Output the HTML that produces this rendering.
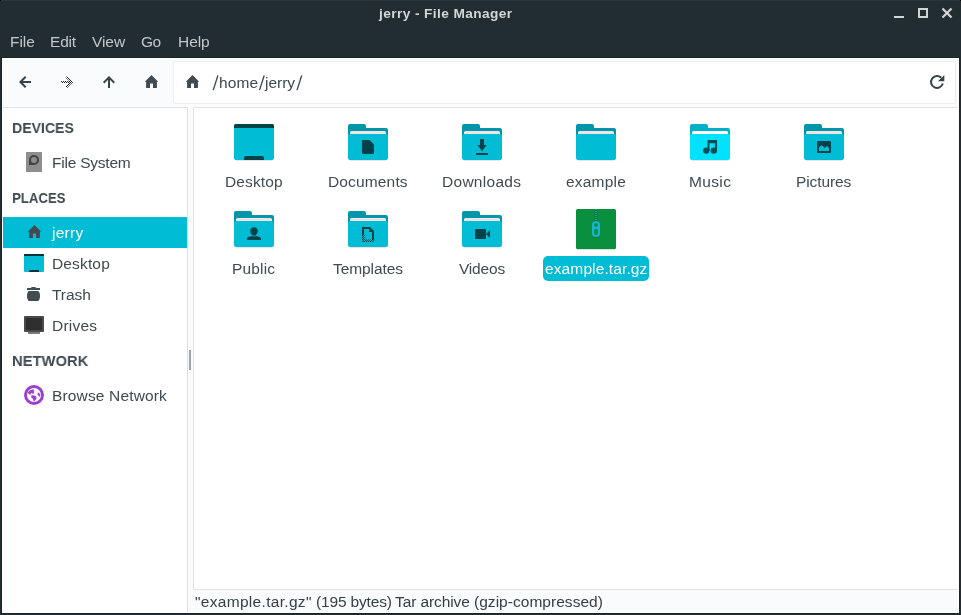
<!DOCTYPE html>
<html>
<head>
<meta charset="utf-8">
<title>jerry - File Manager</title>
<style>
*{margin:0;padding:0;box-sizing:border-box;}
html,body{width:961px;height:615px;overflow:hidden;background:#222d32;}
body{position:relative;font-family:"Liberation Sans",sans-serif;font-size:14.67px;color:#414c52;}
.abs{position:absolute;}
.t{position:absolute;white-space:nowrap;line-height:20px;height:20px;will-change:transform;}
.b{font-weight:bold;}
.ttl{color:#d4d6d7;}
.menu{color:#c3c7c9;}
#frame{left:1px;top:57px;width:959px;height:557px;border:1px solid #1a242a;}
#toolbar{left:2px;top:58px;width:957px;height:555px;background:#fafbfc;border:1px solid #fff;}
#entry{left:173px;top:61px;width:783px;height:43px;background:#fff;border:1px solid #eceeef;border-radius:3px;}
#side{left:3px;top:107px;width:185px;height:505px;background:#fff;border-top:1px solid #e0e2e4;border-right:1px solid #e0e2e4;}
#sel{left:3px;top:217px;width:184px;height:31px;background:#00bcd4;}
#main{left:193px;top:107px;width:765px;height:483px;background:#fff;border:1px solid #e0e2e4;border-right:none;}
#handle{left:189px;top:350px;width:2px;height:20px;background:#9ea4a7;}
#lblsel{left:543px;top:256px;width:106px;height:25px;background:#00bcd4;border-radius:5px;}
.lbl{color:#404b53;}
.sd{color:#3e4950;}
.pth{color:#3e4950;}
.st{color:#353f44;}
svg{position:absolute;overflow:visible;}
</style>
</head>
<body>
<!-- title bar -->
<div class="abs" style="left:0;top:0;width:961px;height:1px;background:#2b363b;"></div>
<div class="abs" style="left:0;top:0;width:1px;height:1px;background:#000;"></div>
<div class="abs" style="left:960px;top:0;width:1px;height:1px;background:#000;"></div>
<!-- window buttons -->
<div class="abs" style="left:894px;top:16px;width:10px;height:2px;background:#d4d6d7;"></div>
<div class="abs" style="left:918px;top:8px;width:10px;height:10px;border:2px solid #d0d3d4;"></div>
<svg style="left:942px;top:8px;" width="10" height="10" viewBox="0 0 10 10"><path d="M0.5 0.5L9.5 9.5M9.5 0.5L0.5 9.5" stroke="#d4d6d7" stroke-width="2.2" fill="none"/></svg>

<!-- menu bar -->

<!-- toolbar + content bg -->
<div class="abs" id="frame"></div>
<div class="abs" id="toolbar"></div>
<div class="abs" id="entry"></div>

<!-- sidebar -->
<div class="abs" id="side"></div>
<div class="abs" id="sel"></div>
<div class="abs" id="handle"></div>

<!-- main -->
<div class="abs" id="main"></div>
<div class="abs" id="lblsel"></div>

<div class="t ttl b" style="left:378.85px;top:3.75px;font-size:13.7px;letter-spacing:0.4px;">jerry - File Manager</div>
<div class="t menu" style="left:10.15px;top:32.33px;font-size:15.5px;letter-spacing:-0.033px;">File</div>
<div class="t menu" style="left:50.05px;top:32.33px;font-size:15.5px;letter-spacing:-0.183px;">Edit</div>
<div class="t menu" style="left:91.75px;top:32.33px;font-size:15.5px;letter-spacing:-0.067px;">View</div>
<div class="t menu" style="left:140.75px;top:32.33px;font-size:15.5px;letter-spacing:-0.45px;">Go</div>
<div class="t menu" style="left:177.75px;top:32.33px;font-size:15.5px;letter-spacing:-0.067px;">Help</div>
<div class="t pth" style="left:219.0px;top:73.13px;font-size:15.5px;letter-spacing:0.133px;">home</div>
<div class="t pth" style="left:265.0px;top:73.13px;font-size:15.5px;letter-spacing:-0.025px;">jerry</div>
<div class="t sd b" style="left:11.85px;top:118.03px;font-size:15.5px;transform:scaleX(0.9075);transform-origin:1.0px 0;">DEVICES</div>
<div class="t sd" style="left:51.85px;top:153.03px;font-size:15.5px;letter-spacing:-0.225px;">File System</div>
<div class="t sd b" style="left:11.85px;top:188.03px;font-size:15.5px;transform:scaleX(0.8482);transform-origin:1.0px 0;">PLACES</div>
<div class="t sd" style="left:52.3px;top:223.03px;font-size:15.5px;letter-spacing:0.275px;color:#fff;">jerry</div>
<div class="t sd" style="left:51.55px;top:254.03px;font-size:15.5px;letter-spacing:0.15px;">Desktop</div>
<div class="t sd" style="left:52.15px;top:285.03px;font-size:15.5px;letter-spacing:-0.037px;">Trash</div>
<div class="t sd" style="left:51.55px;top:316.03px;font-size:15.5px;letter-spacing:0.22px;">Drives</div>
<div class="t sd b" style="left:11.9px;top:351.13px;font-size:15.5px;transform:scaleX(0.9511);transform-origin:1.0px 0;">NETWORK</div>
<div class="t sd" style="left:51.75px;top:386.13px;font-size:15.5px;letter-spacing:0.154px;">Browse Network</div>
<div class="t lbl" style="left:224.55px;top:172.03px;font-size:15.5px;letter-spacing:0.133px;">Desktop</div>
<div class="t lbl" style="left:327.55px;top:172.03px;font-size:15.5px;letter-spacing:0.15px;">Documents</div>
<div class="t lbl" style="left:442.45px;top:172.03px;font-size:15.5px;letter-spacing:0.281px;">Downloads</div>
<div class="t lbl" style="left:565.85px;top:172.03px;font-size:15.5px;letter-spacing:0.2px;">example</div>
<div class="t lbl" style="left:688.55px;top:172.03px;font-size:15.5px;letter-spacing:0.363px;">Music</div>
<div class="t lbl" style="left:795.75px;top:172.03px;font-size:15.5px;letter-spacing:-0.093px;">Pictures</div>
<div class="t lbl" style="left:232.45px;top:259.03px;font-size:15.5px;letter-spacing:0.16px;">Public</div>
<div class="t lbl" style="left:333.35px;top:259.03px;font-size:15.5px;letter-spacing:-0.081px;">Templates</div>
<div class="t lbl" style="left:458.95px;top:259.03px;font-size:15.5px;letter-spacing:-0.19px;">Videos</div>
<div class="t lbl" style="left:544.95px;top:259.03px;font-size:15.5px;letter-spacing:0.119px;color:#fff;">example.tar.gz</div>
<div class="t st" style="left:194.75px;top:591.93px;font-size:15.5px;letter-spacing:0.307px;">&quot;example.tar.gz&quot;</div>
<div class="t st" style="left:315.7px;top:591.93px;font-size:15.5px;letter-spacing:-0.16px;">(195 bytes)</div>
<div class="t st" style="left:395.05px;top:591.93px;font-size:15.5px;letter-spacing:-0.105px;">Tar archive</div>
<div class="t st" style="left:474.0px;top:591.93px;font-size:15.5px;letter-spacing:0.034px;">(gzip-compressed)</div>
<svg width="0" height="0" style="left:0;top:0;">
<defs>
  <g id="fold">
    <path d="M4 13.5V8q0-2 2-2h14q2 0 2 2v2h20q2 0 2 2v6H4z" fill="#0096aa"/>
    <path d="M6 14.5q0-1.5 1.5-1.5h33q1.5 0 1.5 1.5V20H6z" fill="#ede5e5"/>
    <path d="M4 17.5q0-1.5 1.5-1.5h37q1.5 0 1.5 1.5V40q0 2-2 2H6q-2 0-2-2z" fill="#00bcd4"/>
    <path d="M6 42.5h36" stroke="#c9a9a9" stroke-opacity=".35" stroke-width="1"/>
  </g>
  <g id="foldhi">
    <path d="M4 13.5V8q0-2 2-2h14q2 0 2 2v2h20q2 0 2 2v6H4z" fill="#00b0c8"/>
    <path d="M6 14.5q0-1.5 1.5-1.5h33q1.5 0 1.5 1.5V20H6z" fill="#ffffff"/>
    <path d="M4 17.5q0-1.5 1.5-1.5h37q1.5 0 1.5 1.5V40q0 2-2 2H6q-2 0-2-2z" fill="#00e1fb"/>
    <path d="M6 42.5h36" stroke="#c9a9a9" stroke-opacity=".35" stroke-width="1"/>
  </g>
  <g id="desk48">
    <rect x="4" y="6" width="40" height="36" rx="2" fill="#00bcd4"/>
    <path d="M4 10V8q0-2 2-2h36q2 0 2 2v2z" fill="#00424a"/>
    <path d="M14 42v-2q0-2 2-2h16q2 0 2 2v2z" fill="#00424a"/>
    <path d="M6 42.5h36" stroke="#c9a9a9" stroke-opacity=".35" stroke-width="1"/>
  </g>
  <pattern id="stip" width="2" height="2" patternUnits="userSpaceOnUse">
    <rect x="0" y="0" width="1" height="1" fill="#fff"/><rect x="1" y="1" width="1" height="1" fill="#fff"/>
  </pattern>
</defs>
</svg>

<!-- toolbar icons -->
<svg style="left:0;top:0;" width="961" height="120" viewBox="0 0 961 120">
  <g fill="none" stroke="#37434a" stroke-width="2">
    <path d="M25.710 76.700L20.410 82l5.300 5.300M20.500 82H31"/>
    <path d="M103.700 82.710L109 77.410l5.300 5.300M109 77.500V88"/>
  </g>
  <path d="M941.240 77.760A6 6 0 1 0 942.800 83.600" fill="none" stroke="#37434a" stroke-width="2"/>
  <path d="M944.300 75v6.300H938z" fill="#37434a"/>
  <path d="M217.900 75.500L213.200 90.100M264.200 75.500L259.500 90.100M301.700 75.500L297 90.100" fill="none" stroke="#3e4950" stroke-width="1.350"/>
  <mask id="mk" maskUnits="userSpaceOnUse" x="55" y="70" width="30" height="30"><rect x="55" y="70" width="30" height="30" fill="url(#stip)"/></mask>
  <g mask="url(#mk)" fill="none" stroke="#1a2328">
    <path stroke-width="2.300" d="M66.290 76.700L71.590 82l-5.300 5.300"/><path stroke-width="2" d="M71.500 82H61"/>
  </g>
</svg>
<!-- home toolbar -->
<svg style="left:145px;top:75px;" width="13" height="13" viewBox="0 0 13 13"><path fill="#3f4a51" d="M6.5 0L13.2 6.7H11.9V13H8V8.6H5V13H1.1V6.7H-0.2z"/></svg>
<!-- home in entry -->
<svg style="left:186px;top:75px;" width="13" height="13" viewBox="0 0 13 13"><path fill="#3f4a51" d="M6.5 0L13.2 6.7H11.9V13H8V8.6H5V13H1.1V6.7H-0.2z"/></svg>

<!-- sidebar icons -->
<!-- hdd -->
<svg style="left:26px;top:152px;" width="16" height="20" viewBox="0 0 16 20">
  <rect width="16" height="20" rx=".6" fill="#8e8e8e"/>
  <path d="M3 13V8a5 5 0 1 1 5 5z" fill="#444"/>
  <circle cx="8" cy="8" r="3" fill="#8e8e8e"/>
</svg>
<!-- home sidebar -->
<svg style="left:28px;top:225px;" width="13" height="13" viewBox="0 0 13 13"><path fill="#414c52" d="M6.5 0L13.2 6.7H11.9V13H8V8.6H5V13H1.1V6.7H-0.2z"/></svg>
<!-- desktop small -->
<svg style="left:24px;top:254px;" width="20" height="18" viewBox="0 0 20 18">
  <rect width="20" height="18" rx="1" fill="#00bcd4"/>
  <path d="M0 2V1q0-1 1-1h18q1 0 1 1v1z" fill="#00323a"/>
  <path d="M5 18v-1q0-1 1-1h8q1 0 1 1v1z" fill="#00323a"/>
</svg>
<!-- trash -->
<svg style="left:27px;top:287px;" width="13" height="14" viewBox="0 0 13 14">
  <path fill="#414c52" d="M4.3 0h4.4v1H13v2H0V1h4.3z"/>
  <path fill="#414c52" d="M1.6 4h9.8C12.6 5.500 13 7 13 9s-.400 3.500-1.600 5H1.600C.400 12.500 0 11 0 9s.400-3.500 1.600-5z"/>
</svg>
<!-- drives -->
<svg style="left:24px;top:316px;" width="20" height="18" viewBox="0 0 20 18">
  <rect x="4" y="15" width="12" height="3" rx=".5" fill="#7b7b7b"/>
  <rect width="20" height="16" rx="1" fill="#4a4a4a"/>
  <rect x="2" y="2" width="16" height="12" fill="#2f2f2f"/>
</svg>
<!-- network -->
<svg style="left:24px;top:385px;" width="20" height="20" viewBox="0 0 20 20">
  <circle cx="10" cy="10" r="8.500" fill="#fff" stroke="#9b40d0" stroke-width="3"/>
  <path fill="#9b40d0" stroke="#9b40d0" stroke-width=".25" stroke-linejoin="round" d="M8.300 4.700l1.500-.1.100 3.800-1.500.2-.8-.7-.9.500-.4 1.400-1.700-1.200-.8-.9 1.100-1.500 1.900-1.100zM7.400 10.500l1.600-.3 3 1.100.5 2.300-1.200 1.400-1.200 1.400-.8-1.400-.4-1.500-1.500-.7zM14.400 7.400l1.800 2.100-.6 2.200-1.800-1.700-.1-1.500z"/>
</svg>

<!-- main icons row 1 -->
<svg style="left:230px;top:118px;" width="48" height="48" viewBox="0 0 48 48"><use href="#desk48"/></svg>
<svg style="left:344px;top:118px;" width="48" height="48" viewBox="0 0 48 48"><use href="#fold"/>
  <path fill="#00424a" d="M18 23q0-1 1-1h6.500L30 26.500V35q0 1-1 1H19q-1 0-1-1z"/></svg>
<svg style="left:458px;top:118px;" width="48" height="48" viewBox="0 0 48 48"><use href="#fold"/>
  <path fill="#00424a" d="M22 21h4v6h2.500L24 33.300 19.500 27H22zM18 35h12v2H18z"/></svg>
<svg style="left:572px;top:118px;" width="48" height="48" viewBox="0 0 48 48"><use href="#fold"/></svg>
<svg style="left:686px;top:118px;" width="48" height="48" viewBox="0 0 48 48"><use href="#foldhi"/>
  <path fill="#004f59" d="M22.400 22H31v11h-2.100V25.300h-5.400V33h-2.100V23q0-1 1-1z"/>
  <circle cx="20.200" cy="32.600" r="3.200" fill="#004f59"/><circle cx="27.800" cy="32.600" r="3.200" fill="#004f59"/></svg>
<svg style="left:800px;top:118px;" width="48" height="48" viewBox="0 0 48 48"><use href="#fold"/>
  <rect x="17" y="23" width="14" height="12" rx="1" fill="#00424a"/>
  <path fill="#00bcd4" d="M19 33v-3.500l2.500-2.500 3 3 2.500-2 2 2V33z"/></svg>

<!-- row 2 -->
<svg style="left:230px;top:205px;" width="48" height="48" viewBox="0 0 48 48"><use href="#fold"/>
  <path fill="#00424a" d="M17 35v-1.200q0-1.600 2-2.100l3.800-.9q1.200.7 2.400 0l3.800.9q2 .5 2 2.100V35z"/>
  <path fill="#00424a" stroke="#00bcd4" stroke-width=".7" d="M24 21.900c2.300 0 4.100 1.700 4.100 4 0 1.300-.6 2.700-1.500 3.700-.6.900-1.200 1.500-2.600 1.500s-2-.6-2.600-1.500c-.9-1-1.500-2.400-1.500-3.700 0-2.300 1.800-4 4.100-4z"/></svg>
<svg style="left:344px;top:205px;" width="48" height="48" viewBox="0 0 48 48"><use href="#fold"/>
  <mask id="mk2" maskUnits="userSpaceOnUse" x="0" y="0" width="48" height="48"><rect width="48" height="48" fill="url(#stip)"/></mask>
  <path fill="none" stroke="#00424a" stroke-width="2" d="M19 30V23h6.500L29 26.500V34.500"/>
  <path fill="#00424a" d="M25 23l4 4h-4z"/>
  <g mask="url(#mk2)"><path fill="none" stroke="#00323a" stroke-width="2.600" d="M19.300 30v5.700H30M29 34v2"/></g></svg>
<svg style="left:458px;top:205px;" width="48" height="48" viewBox="0 0 48 48"><use href="#fold"/>
  <rect x="17" y="24" width="11" height="10" rx="1" fill="#00424a"/>
  <path fill="#00424a" d="M32 24.900v8.200L28 29z"/></svg>
<!-- archive -->
<svg style="left:572px;top:205px;" width="48" height="48" viewBox="0 0 48 48">
  <rect x="4" y="4" width="40" height="40" rx="1.500" fill="#098f3e"/>
  <path d="M4.500 44.300h39" stroke="#0b5c2c" stroke-opacity=".25" stroke-width=".8"/>
  <rect x="22.600" y="4" width="2.800" height="13" fill="#05753a"/>
  <path d="M24 4v12.500" stroke="#33c3de" stroke-width="1.100" stroke-dasharray="1 1"/>
  <ellipse cx="24" cy="32.300" rx="3.200" ry="1" fill="#05753a" fill-opacity=".6"/>
  <rect x="20" y="16.300" width="8" height="15.700" rx="4" fill="#17b5d7"/>
  <circle cx="24" cy="19.900" r="1.850" fill="#098f3e"/>
  <rect x="22.150" y="23.800" width="3.700" height="6.300" rx="1.850" fill="#098f3e"/>
</svg>

</body>
</html>
